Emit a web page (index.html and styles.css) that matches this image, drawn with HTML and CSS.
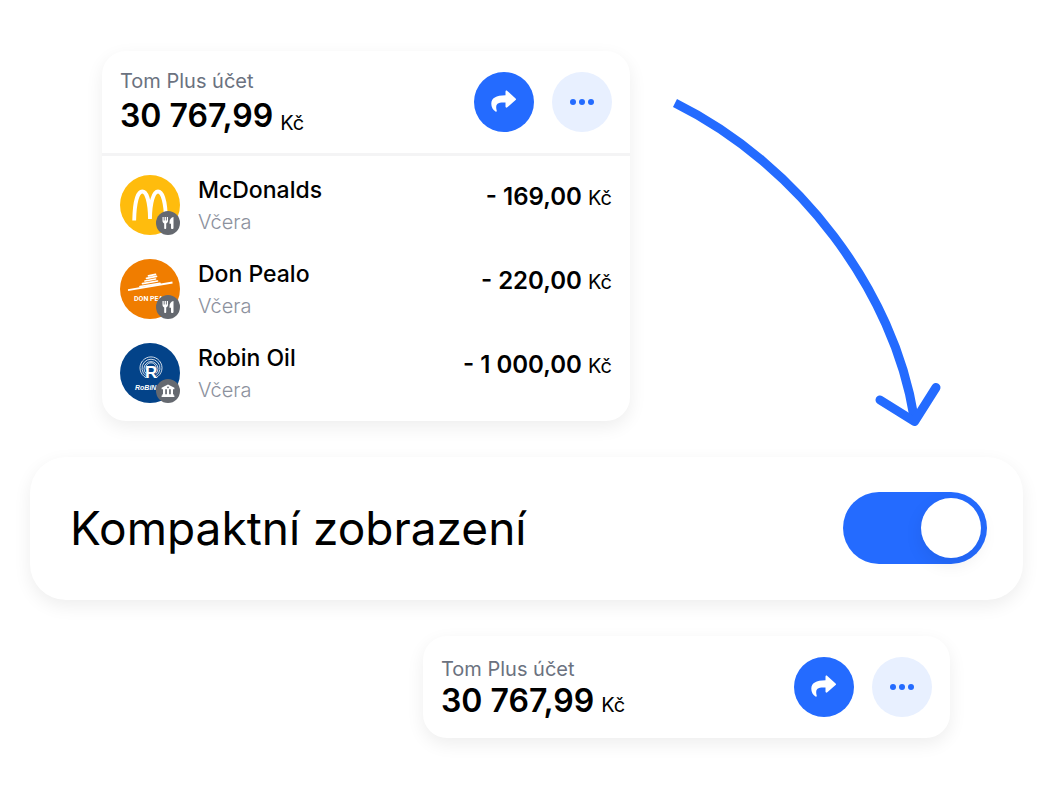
FILE: index.html
```html
<!DOCTYPE html>
<html lang="cs">
<head>
    <meta charset="utf-8">
    <meta name="viewport" content="width=device-width, initial-scale=1">
    <title>Kompaktní zobrazení</title>
    <link rel="stylesheet" href="styles.css">
</head>
<body>

<!-- Shared icons -->
<svg class="sprite" aria-hidden="true">
    <symbol id="icon-share" viewBox="0 0 26 24">
        <path d="M14.500 1.700c0-1.100 1-1.500 1.800-.8l8.300 7.500c.6.500.6 1.200 0 1.700l-8.300 7.200c-.8.700-1.800.3-1.800-.7v-4c-6 0-9.300.3-9.300 4.900 0 1 .2 2 .5 3 .3 1-.4 1.500-1.200.9C1.800 19.500.3 17 .3 13.700.3 8 5 5.500 14.500 5.300z" fill="#fff"/>
    </symbol>
    <symbol id="icon-food" viewBox="0 0 24 24">
        <path d="M6.500 6v4.100c0 1.200.8 2 1.700 2.300V17c0 .7.400 1 1 1s1-.3 1-1v-4.600c1-.3 1.800-1.100 1.800-2.300V6h-1.200v3.500h-.9V6H8.600v3.500h-.9V6zM17.500 6c-2.300.3-4 2.400-4 5.200v1.600H15V17c0 .7.500 1 1.200 1s1.300-.3 1.300-1z" fill="#fff"/>
    </symbol>
    <symbol id="icon-bank" viewBox="0 0 24 24">
        <path d="M12 5.500l6.400 3.200v1.500H5.600V8.700zM7 10h2.200v5.500H7zM10.900 10h2.200v5.500h-2.200zM14.800 10H17v5.500h-2.200zM6.300 15.300h11.400v1.200h.7V18H5.600v-1.500h.7z" fill="#fff"/>
        <circle cx="12" cy="8.300" r=".9" fill="#656970"/>
    </symbol>
</svg>

<main class="page">
    <div class="top">
        <section class="card account">
            <header class="account-header">
                <div class="balance">
                    <h2 class="account-name">Tom Plus účet</h2>
                    <p class="account-balance">30 767,99 <span class="currency">Kč</span></p>
                </div>
                <div class="actions">
                    <button class="action primary" type="button" aria-label="Odeslat">
                        <svg class="icon-share"><use href="#icon-share"/></svg>
                    </button>
                    <button class="action" type="button" aria-label="Další">
                        <span class="dot"></span><span class="dot"></span><span class="dot"></span>
                    </button>
                </div>
            </header>
            <ul class="transactions">
                <li class="transaction">
                    <div class="avatar">
                        <svg class="logo" viewBox="0 0 60 60" aria-hidden="true">
                            <circle cx="30" cy="30" r="30" fill="#ffbc0d"/>
                            <path d="M14.200 45.500C14.500 28 17.500 16.500 22.300 16.500c4.300 0 7.500 10.500 7.700 27.500C30.200 27 33.600 16.500 38 16.500c4.700 0 7.700 11.500 8 29" fill="none" stroke="#fff" stroke-width="3.800"/>
                        </svg>
                        <svg class="badge"><use href="#icon-food"/></svg>
                    </div>
                    <div class="merchant">
                        <h3 class="merchant-name">McDonalds</h3>
                        <p class="date">Včera</p>
                    </div>
                    <p class="amount">- 169,00 <span class="currency">Kč</span></p>
                </li>
                <li class="transaction">
                    <div class="avatar">
                        <svg class="logo" viewBox="0 0 60 60" aria-hidden="true">
                            <circle cx="30" cy="30" r="30" fill="#f07d00"/>
                            <path d="M8 31.200L52.500 23.500" stroke="#fff" stroke-width="1.800"/>
                            <path d="M20 27.500l20-3.200M22.500 24.700l15-2.700M25 22l10.500-2M26.500 19.400l10-2M28.500 16.800l7-1.500" stroke="#fff" stroke-width="1.700" stroke-linecap="round"/>
                            <text class="logo-pealo" x="14" y="42">DON PEALO</text>
                        </svg>
                        <svg class="badge"><use href="#icon-food"/></svg>
                    </div>
                    <div class="merchant">
                        <h3 class="merchant-name">Don Pealo</h3>
                        <p class="date">Včera</p>
                    </div>
                    <p class="amount">- 220,00 <span class="currency">Kč</span></p>
                </li>
                <li class="transaction">
                    <div class="avatar">
                        <svg class="logo" viewBox="0 0 60 60" aria-hidden="true">
                            <circle cx="30" cy="30" r="30" fill="#034389"/>
                            <g fill="none" stroke="#fff" stroke-width=".8">
                                <path d="M26 34.700A11 11 0 1 1 36 34.700"/>
                                <path d="M26 32.700A9 9 0 1 1 36 32.700"/>
                                <path d="M26 30.500A7 7 0 1 1 36 30.500"/>
                                <path d="M26.500 27A5 5 0 1 1 35.500 27"/>
                            </g>
                            <path d="M27 22h8v13h-8z" fill="#034389"/>
                            <text class="logo-r" x="25" y="35">R</text>
                            <text class="logo-robin" x="15" y="47">RoBiN</text>
                        </svg>
                        <svg class="badge"><use href="#icon-bank"/></svg>
                    </div>
                    <div class="merchant">
                        <h3 class="merchant-name">Robin Oil</h3>
                        <p class="date">Včera</p>
                    </div>
                    <p class="amount">- 1 000,00 <span class="currency">Kč</span></p>
                </li>
            </ul>
        </section>

        <svg class="arrow" viewBox="0 0 280 335" aria-hidden="true">
            <path d="M5 8C130 70 224 197 244 322"/>
            <path class="arrow-head" d="M210 305l34.500 21.500 21.500-34"/>
        </svg>
    </div>

    <section class="card setting">
        <label class="setting-label" for="compactView">Kompaktní zobrazení</label>
        <span class="switch">
            <input type="checkbox" id="compactView" checked>
            <span class="slider"></span>
        </span>
    </section>

    <section class="card compact">
        <header class="account-header">
            <div class="balance">
                <h2 class="account-name">Tom Plus účet</h2>
                <p class="account-balance">30 767,99 <span class="currency">Kč</span></p>
            </div>
            <div class="actions">
                <button class="action primary" type="button" aria-label="Odeslat">
                    <svg class="icon-share"><use href="#icon-share"/></svg>
                </button>
                <button class="action" type="button" aria-label="Další">
                    <span class="dot"></span><span class="dot"></span><span class="dot"></span>
                </button>
            </div>
        </header>
    </section>
</main>

</body>
</html>
```
FILE: styles.css
```css
* {
    box-sizing: border-box;
}

body {
    margin: 0;
    background-color: #fff;
    color: #000;
    font-family: Inter, sans-serif;
}

h2, h3, p, ul {
    margin: 0;
    padding: 0;
    font-weight: 400;
}

.sprite {
    position: absolute;
    width: 0;
    height: 0;
}

.page {
    display: flex;
    flex-direction: column;
    gap: 36px;
    padding: 51px 30px 48px;
}

.top {
    display: flex;
    align-items: flex-start;
    gap: 40px;
    padding-left: 72px;
}

.card {
    background-color: #fff;
    border-radius: 24px;
    box-shadow: 0 6px 18px rgba(0, 0, 0, .07);
}

.account {
    flex: 0 1 528px;
}

.account-header {
    display: flex;
    justify-content: space-between;
    align-items: center;
    height: 102px;
    padding: 0 18px;
}

.account .account-header {
    height: 105px;
    border-bottom: 3px solid #f4f4f5;
}

.account-name {
    color: #6b7280;
    font-size: 20px;
    line-height: 28px;
}

.account-balance {
    display: flex;
    align-items: flex-end;
    gap: 7px;
    font-size: 32px;
    font-weight: 600;
    line-height: 36px;
}

.account .account-balance {
    line-height: 42px;
}

.account-balance .currency,
.account .account-balance .currency {
    line-height: 28px;
}

.currency {
    font-size: 20px;
    font-weight: 400;
}

.actions {
    display: flex;
    gap: 18px;
}

.action {
    display: flex;
    justify-content: center;
    align-items: center;
    gap: 3px;
    width: 60px;
    height: 60px;
    padding: 0;
    border: 0;
    border-radius: 50%;
    background-color: #e8f0ff;
    cursor: pointer;
}

.primary {
    background-color: #246bff;
}

.icon-share {
    width: 26px;
    height: 24px;
}

.dot {
    width: 6px;
    height: 6px;
    border-radius: 50%;
    background-color: #246bff;
}

.transactions {
    display: flex;
    flex-direction: column;
    gap: 20px;
    padding: 17px 18px 16px;
    list-style: none;
}

.transaction {
    display: flex;
    align-items: center;
    gap: 18px;
}

.avatar {
    position: relative;
    width: 60px;
    height: 60px;
}

.logo {
    display: block;
    width: 60px;
    height: 60px;
}

.logo-pealo {
    fill: #fff;
    font: 700 7px Roboto, sans-serif;
}

.logo-r {
    fill: #fff;
    font: 700 17px "Liberation Sans", sans-serif;
}

.logo-robin {
    fill: #fff;
    font: italic 700 7px "Liberation Sans", sans-serif;
}

.badge {
    position: absolute;
    right: 0;
    bottom: 0;
    width: 24px;
    height: 24px;
    border-radius: 50%;
    background-color: #656970;
}

.merchant {
    flex: 1;
}

.merchant-name {
    font-size: 23px;
    font-weight: 500;
    line-height: 34px;
}

.date {
    color: #8d929e;
    font-size: 20px;
    font-weight: 300;
    line-height: 30px;
}

.amount {
    padding-bottom: 16px;
    font-size: 24px;
    font-weight: 600;
    line-height: 30px;
}

.arrow {
    flex: 0 1 280px;
    margin: 44px 0 -12px;
    fill: none;
    stroke: #246bff;
    stroke-width: 9px;
}

.arrow-head {
    stroke-linecap: round;
    stroke-linejoin: round;
}

.setting {
    display: flex;
    justify-content: space-between;
    align-items: center;
    padding: 35px 36px 36px 40px;
    border-radius: 36px;
}

.setting-label {
    font-size: 46px;
    line-height: 72px;
}

.switch {
    position: relative;
    width: 144px;
    height: 72px;
}

.switch input {
    position: absolute;
    z-index: 1;
    width: 100%;
    height: 100%;
    margin: 0;
    opacity: 0;
    cursor: pointer;
}

.slider {
    display: block;
    height: 100%;
    padding: 6px;
    border-radius: 36px;
    background-color: #ccc;
    transition: .4s;
}

.slider:before {
    display: block;
    content: "";
    width: 60px;
    height: 60px;
    border-radius: 50%;
    background-color: white;
    box-shadow: 0 6px 18px rgba(0, 0, 0, .08);
    transition: .4s;
}

input:checked + .slider {
    background-color: #246bff;
}

input:checked + .slider:before {
    transform: translateX(72px);
}

.compact {
    align-self: flex-end;
    width: 527px;
    max-width: 100%;
    margin-right: 73px;
}
```
